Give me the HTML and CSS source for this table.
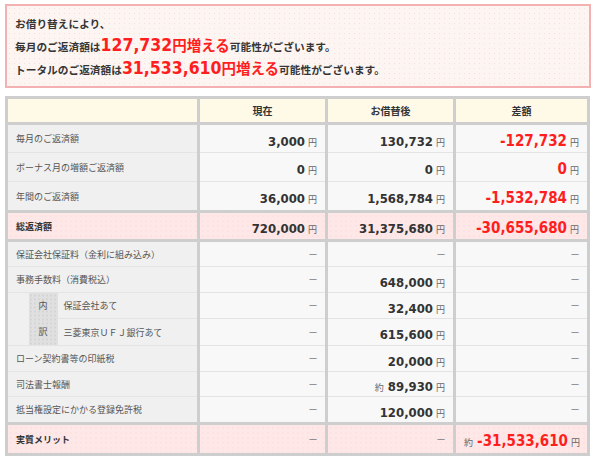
FILE: index.html
```html
<!DOCTYPE html>
<html lang="ja">
<head>
<meta charset="utf-8">
<title>お借り替え比較</title>
<link rel="stylesheet" href="styles.css">
</head>
<body>
<div class="page">
  <div class="notice">
    <p class="line line-first">お借り替えにより、</p>
    <p class="line">毎月のご返済額は<span class="big"><span class="num">127,732</span>円増える</span>可能性がございます。</p>
    <p class="line">トータルのご返済額は<span class="big"><span class="num">31,533,610</span>円増える</span>可能性がございます。</p>
  </div>

  <table class="compare">
    <colgroup>
      <col class="c-indent"><col class="c-sub"><col class="c-label">
      <col class="c-val"><col class="c-val"><col class="c-diff">
    </colgroup>
    <thead>
      <tr class="head">
        <th colspan="3"></th><th>現在</th><th>お借替後</th><th>差額</th>
      </tr>
    </thead>
    <tbody>
      <tr class="h29">
        <th colspan="3">毎月のご返済額</th>
        <td><span class="n">3,000</span><span class="yen">円</span></td>
        <td><span class="n">130,732</span><span class="yen">円</span></td>
        <td><span class="n red">-127,732</span><span class="yen">円</span></td>
      </tr>
      <tr class="h29">
        <th colspan="3">ボーナス月の増額ご返済額</th>
        <td><span class="n">0</span><span class="yen">円</span></td>
        <td><span class="n">0</span><span class="yen">円</span></td>
        <td><span class="n red">0</span><span class="yen">円</span></td>
      </tr>
      <tr class="h30">
        <th colspan="3">年間のご返済額</th>
        <td><span class="n">36,000</span><span class="yen">円</span></td>
        <td><span class="n">1,568,784</span><span class="yen">円</span></td>
        <td><span class="n red">-1,532,784</span><span class="yen">円</span></td>
      </tr>
      <tr class="sum h29">
        <th colspan="3" class="strong">総返済額</th>
        <td><span class="n">720,000</span><span class="yen">円</span></td>
        <td><span class="n">31,375,680</span><span class="yen">円</span></td>
        <td><span class="n red">-30,655,680</span><span class="yen">円</span></td>
      </tr>
      <tr class="h26">
        <th colspan="3">保証会社保証料（金利に組み込み）</th>
        <td class="dash">—</td>
        <td class="dash">—</td>
        <td class="dash">—</td>
      </tr>
      <tr class="h26">
        <th colspan="3">事務手数料（消費税込）</th>
        <td class="dash">—</td>
        <td><span class="n">648,000</span><span class="yen">円</span></td>
        <td class="dash">—</td>
      </tr>
      <tr class="h26">
        <th rowspan="2" class="indent"></th>
        <th rowspan="2" class="uchi">内<br>訳</th>
        <th class="sublabel">保証会社あて</th>
        <td class="dash">—</td>
        <td><span class="n">32,400</span><span class="yen">円</span></td>
        <td class="dash">—</td>
      </tr>
      <tr class="h27">
        <th class="sublabel">三菱東京ＵＦＪ銀行あて</th>
        <td class="dash">—</td>
        <td><span class="n">615,600</span><span class="yen">円</span></td>
        <td class="dash">—</td>
      </tr>
      <tr class="h26">
        <th colspan="3">ローン契約書等の印紙税</th>
        <td class="dash">—</td>
        <td><span class="n">20,000</span><span class="yen">円</span></td>
        <td class="dash">—</td>
      </tr>
      <tr class="h25">
        <th colspan="3">司法書士報酬</th>
        <td class="dash">—</td>
        <td><span class="approx">約</span><span class="n">89,930</span><span class="yen">円</span></td>
        <td class="dash">—</td>
      </tr>
      <tr class="h27">
        <th colspan="3">抵当権設定にかかる登録免許税</th>
        <td class="dash">—</td>
        <td><span class="n">120,000</span><span class="yen">円</span></td>
        <td class="dash">—</td>
      </tr>
      <tr class="sum h31">
        <th colspan="3" class="strong">実質メリット</th>
        <td class="dash">—</td>
        <td class="dash">—</td>
        <td><span class="approx">約</span><span class="n red">-31,533,610</span><span class="yen">円</span></td>
      </tr>
    </tbody>
  </table>
</div>
</body>
</html>
```

FILE: styles.css
```css
* { box-sizing: border-box; }

html, body {
  margin: 0;
  background: #ffffff;
}

body {
  font-family: "Noto Sans CJK JP", sans-serif;
  color: #333333;
}

.page {
  width: 600px;
  padding: 4px 0 0 5px;
}

/* ---------- notice box ---------- */
.notice {
  width: 586px;
  border: 2px solid #f3b1b1;
  background-color: #fcf5f2;
  background-image: radial-gradient(circle, #f6e0dc 0.6px, transparent 0.9px);
  background-size: 5px 5px;
  padding: 9px 8px 7px;
}

.line {
  margin: 0;
  font-size: 10.7px;
  font-weight: bold;
  line-height: 23px;
  height: 23px;
  color: #353535;
  white-space: nowrap;
}

.line-first {
  line-height: 18px;
  height: 18px;
}

.big {
  color: #ff1e1e;
  font-size: 14.5px;
}

.big .num {
  font-family: "DejaVu Sans Condensed", "DejaVu Sans", sans-serif;
  font-size: 17.5px;
}

/* ---------- comparison table ---------- */
.compare {
  margin-top: 8px;
  width: 585px;
  border-collapse: collapse;
  table-layout: fixed;
  border: 3px solid #cecece;
}

.c-indent { width: 22px; }
.c-sub { width: 29px; }
.c-label { width: 141px; }
.c-val { width: 128px; }
.c-diff { width: 134px; }

.compare th,
.compare td {
  padding: 0 8px;
  border-top: 1px solid #e4e4e4;
  border-bottom: 1px solid #e4e4e4;
  border-left: 3px solid #cecece;
  border-right: 3px solid #cecece;
  vertical-align: middle;
  white-space: nowrap;
}

.compare tbody th {
  text-align: left;
  font-weight: normal;
  font-size: 9px;
  color: #555555;
  background: #f0f0f0;
}

.compare td {
  text-align: right;
  background-color: #f8f8f8;
}

.head th {
  height: 26px;
  background: #fffae7;
  border-bottom: 3px solid #cecece;
  text-align: center;
  font-size: 10px;
  font-weight: bold;
  color: #333333;
}

.h25 { height: 25px; }
.h26 { height: 26px; }
.h27 { height: 27px; }
.h29 { height: 29px; }
.h30 { height: 30px; }
.h31 { height: 31px; }

.compare tr.sum th,
.compare tr.sum td {
  background-color: #fde7e7;
  background-image: radial-gradient(circle, #f7d2d2 0.6px, transparent 0.9px);
  background-size: 5px 5px;
  border-top: 3px solid #cecece;
  border-bottom: 3px solid #cecece;
}

.compare tbody th.strong {
  font-weight: bold;
  color: #333333;
}

.compare th.indent {
  border-right: none;
  padding: 0;
}

.compare th.uchi {
  border-left: none;
  border-right: none;
  padding: 0;
  text-align: center;
  line-height: 26px;
  background-color: #e0e0e0;
  background-image: radial-gradient(circle, #d0d0d0 0.6px, transparent 0.9px);
  background-size: 4px 4px;
}

.compare th.sublabel {
  border-left: none;
  padding-left: 6px;
}

.n {
  font-family: "DejaVu Sans Condensed", "DejaVu Sans", sans-serif;
  font-weight: bold;
  font-size: 13px;
  color: #333333;
}

.n.red {
  color: #ff1e1e;
  font-size: 15px;
}

.yen {
  margin-left: 3px;
  font-size: 9px;
  color: #666666;
}

.approx {
  margin-right: 4px;
  font-size: 9px;
  color: #666666;
}

.dash {
  font-family: "DejaVu Sans", sans-serif;
  font-size: 8px;
  color: #666666;
}
```
